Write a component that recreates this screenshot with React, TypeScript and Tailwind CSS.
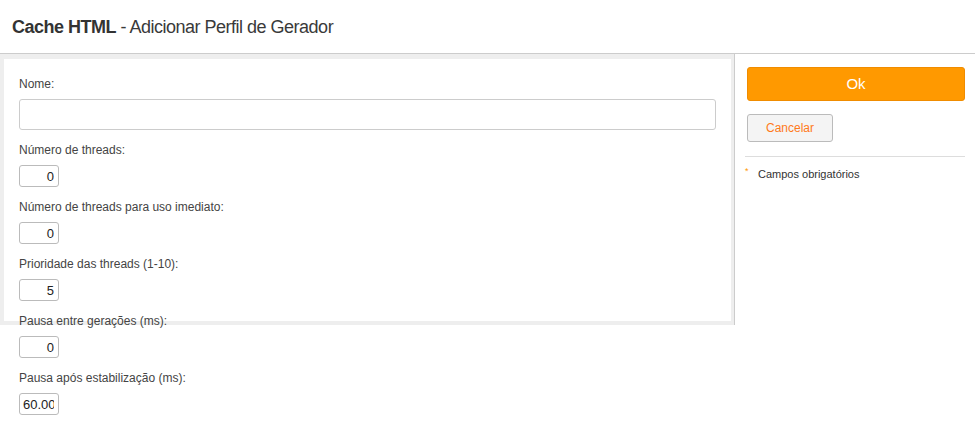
import React from "react";

const fields = [
  { label: "Número de threads:", value: "0" },
  { label: "Número de threads para uso imediato:", value: "0" },
  { label: "Prioridade das threads (1-10):", value: "5" },
  { label: "Pausa entre gerações (ms):", value: "0" },
  { label: "Pausa após estabilização (ms):", value: "60.000" },
];

const App = () => {
  return (
    <div className="w-[975px] h-[425px] bg-white font-['Liberation_Sans',Arial,sans-serif] overflow-hidden">
      <div className="h-[54px] border-b border-[#cccccc] flex items-center px-[12px]">
        <h1 className="text-[18px] text-[#3a3a3a] tracking-[-0.5px] pt-[1px]">
          <span className="font-bold text-[#333333]">Cache HTML</span> - Adicionar Perfil de Gerador
        </h1>
      </div>

      <div className="flex">
        <div className="w-[735px] h-[271px] bg-[#eeeeee] pt-[5px] pl-[4px] pr-[3px] pb-[4px] border-r border-[#cccccc]">
          <div className="bg-white h-full px-[15px] pt-[18px]">
            <label className="block text-[12px] leading-[14px] text-[#444444] mb-[8px]">Nome:</label>
            <input
              type="text"
              className="block w-[697px] h-[31px] border border-[#cccccc] rounded-[3px] mb-[13px] outline-none"
            />
            {fields.map((f) => (
              <div key={f.label}>
                <label className="block text-[12px] leading-[14px] text-[#444444] mb-[8px]">{f.label}</label>
                <input
                  type="text"
                  defaultValue={f.value}
                  className="block w-[40px] h-[22px] border border-[#bbbbbb] rounded-[3px] mb-[13px] text-right pr-[4px] pl-[3px] text-[13px] text-[#222222] outline-none"
                />
              </div>
            ))}
          </div>
        </div>

        <div className="flex-1 pt-[13px] pl-[10px] pr-[10px]">
          <button className="ml-[2px] w-[218px] h-[34px] bg-[#ff9900] border border-[#f08c00] rounded-[3px] text-white text-[15px]">
            Ok
          </button>
          <button className="block ml-[2px] mt-[13px] w-[86px] h-[28px] bg-[#f4f4f4] border border-[#bbbbbb] rounded-[3px] text-[#ff7a1a] text-[12px]">
            Cancelar
          </button>
          <div className="mt-[14px] border-t border-[#dddddd]" />
          <div className="mt-[9px] flex items-center text-[11px] text-[#333333]">
            <span className="text-[#ff9900] w-[13px] text-[9px] -mt-[5px]">*</span>
            <span>Campos obrigatórios</span>
          </div>
        </div>
      </div>
    </div>
  );
};

export default App;
